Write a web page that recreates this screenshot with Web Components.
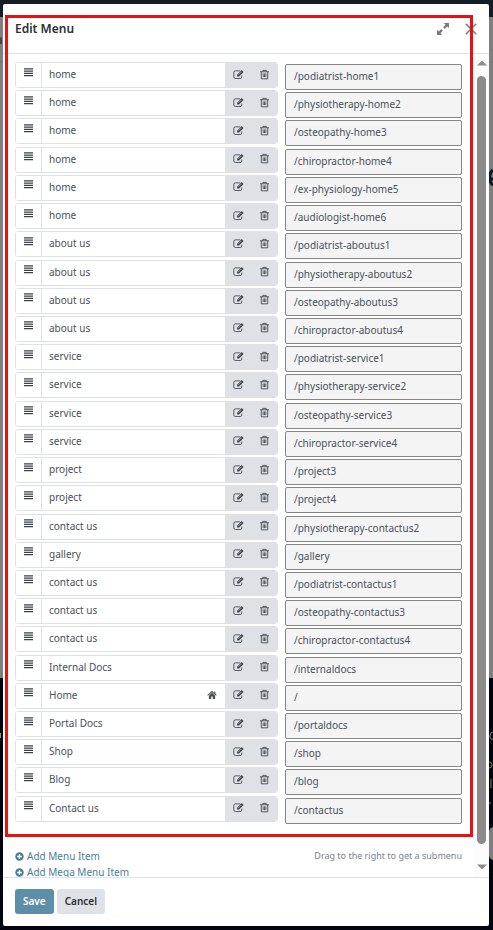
<!DOCTYPE html>
<html lang="en">
<head>
<meta charset="utf-8">
<meta name="viewport" content="width=device-width, initial-scale=1">
<title>Edit Menu</title>
<style>
    html, body {
        height: 100%;
        margin: 0;
    }

    body {
        font-family: "Noto Sans", "Open Sans", sans-serif;
        font-size: 10px;
        line-height: 16px;
        color: #495057;
        overflow: hidden;
    }
</style>
</head>
<body>
<menu-dialog heading="Edit Menu">
    <menu-list></menu-list>
</menu-dialog>

<script>
const ICONS = {
    bars: '<path d="M0 1.600h16M0 5.600h16M0 9.600h16M0 13.600h16" stroke="currentColor" stroke-width="1.900" fill="none"/>',
    edit: '<path d="M10.500 2.700H3.500a2.300 2.300 0 0 0-2.300 2.300v6.500a2.300 2.300 0 0 0 2.300 2.300h7a2.300 2.300 0 0 0 2.300-2.300V9.500" stroke="currentColor" stroke-width="1.200" fill="none"/><path d="M6 8.300 12.700 1.600l2.700 2.700L8.700 11H6z" fill="currentColor"/><path d="m7.500 8.800 4.700-4.700" stroke="#dee2e6" stroke-width=".8"/>',
    trash: '<path d="M1.500 4h13M5.500 4V2h5v2M3.300 4v10.300h9.400V4M6 6.500v5.300M8 6.500v5.300M10 6.500v5.300" stroke="currentColor" stroke-width="1.200" fill="none" stroke-linejoin="round"/>',
    home: '<path d="M8 4.500 3 9v5.500h3.800v-4h2.400v4H13V9z" fill="currentColor"/><path d="m1 8.500 7-6 7 6M12.500 6V2.500" stroke="currentColor" stroke-width="1.700" fill="none"/>',
    plus: '<circle cx="8" cy="8" r="7.500" fill="currentColor"/><path d="M8 3.800v8.400M3.800 8h8.400" stroke="#fff" stroke-width="2.400"/>',
    expand: '<path d="M9 0h7v7l-2.400-2.400-3.300 3.300-2.200-2.200 3.300-3.300zM7 16H0V9l2.400 2.400 3.300-3.300 2.200 2.200-3.300 3.300z" fill="currentColor"/>',
    close: '<path d="m1 1 14 14M15 1 1 15" stroke="currentColor" stroke-width="2" fill="none"/>',
    up: '<path d="M0 12 8 4l8 8z" fill="currentColor"/>',
    down: '<path d="M0 4l8 8 8-8z" fill="currentColor"/>'
};

class UiIcon extends HTMLElement {
    connectedCallback() {
        const shadow = this.attachShadow({ mode: 'open' });
        shadow.innerHTML = `
            <style>
                :host { display: inline-flex; width: var(--size, 10px); height: var(--size, 10px); }
                svg { width: 100%; height: 100%; }
            </style>
            <svg viewBox="0 0 16 16" aria-hidden="true">${ICONS[this.getAttribute('name')]}</svg>
        `;
    }
}

class MenuRow extends HTMLElement {
    connectedCallback() {
        const label = this.getAttribute('label');
        const url = this.getAttribute('url');
        const home = this.hasAttribute('home') ? '<ui-icon name="home" title="Home page"></ui-icon>' : '';
        const shadow = this.attachShadow({ mode: 'open' });

        shadow.innerHTML = `
            <style>
                :host {
                    display: grid;
                    grid-template-columns: minmax(0, 1fr) 177px;
                    column-gap: 7px;
                    height: 28px;
                }

                * { box-sizing: border-box; }

                .item {
                    display: flex;
                    height: 26px;
                    border: 1px solid #dee2e6;
                    border-radius: 3px;
                    overflow: hidden;
                }

                button {
                    width: 26px;
                    padding: 0 0 2px;
                    border: 0;
                    display: flex;
                    justify-content: center;
                    align-items: center;
                    background: #dee2e6;
                    color: #3b4148;
                    --size: 11px;
                    cursor: pointer;
                }

                .handle {
                    background: #fff;
                    border-right: 1px solid #dee2e6;
                    padding-bottom: 6px;
                    --size: 9px;
                    cursor: move;
                }

                .field {
                    flex: 1;
                    min-width: 0;
                    display: flex;
                    align-items: center;
                    padding: 0 8px 2px 7px;
                }

                input {
                    font: inherit;
                    color: inherit;
                    min-width: 0;
                    outline: 0;
                }

                .field input {
                    flex: 1;
                    border: 0;
                    padding: 0;
                    background: none;
                }

                .url {
                    width: 100%;
                    height: 26px;
                    margin-top: 2px;
                    padding: 0 8px 2px;
                    border: 1px solid #868686;
                    border-radius: 2px;
                    background: #f4f4f4;
                }
            </style>
            <div class="item">
                <button class="handle" aria-label="Move ${label}"><ui-icon name="bars"></ui-icon></button>
                <div class="field">
                    <input type="text" readonly aria-label="Menu label" value="${label}">
                    ${home}
                </div>
                <button aria-label="Edit ${label}"><ui-icon name="edit"></ui-icon></button>
                <button aria-label="Delete ${label}"><ui-icon name="trash"></ui-icon></button>
            </div>
            <input class="url" type="text" readonly aria-label="Menu url" value="${url}">
        `;
    }
}

const MENU = [
    ['home', '/podiatrist-home1'],
    ['home', '/physiotherapy-home2'],
    ['home', '/osteopathy-home3'],
    ['home', '/chiropractor-home4'],
    ['home', '/ex-physiology-home5'],
    ['home', '/audiologist-home6'],
    ['about us', '/podiatrist-aboutus1'],
    ['about us', '/physiotherapy-aboutus2'],
    ['about us', '/osteopathy-aboutus3'],
    ['about us', '/chiropractor-aboutus4'],
    ['service', '/podiatrist-service1'],
    ['service', '/physiotherapy-service2'],
    ['service', '/osteopathy-service3'],
    ['service', '/chiropractor-service4'],
    ['project', '/project3'],
    ['project', '/project4'],
    ['contact us', '/physiotherapy-contactus2'],
    ['gallery', '/gallery'],
    ['contact us', '/podiatrist-contactus1'],
    ['contact us', '/osteopathy-contactus3'],
    ['contact us', '/chiropractor-contactus4'],
    ['Internal Docs', '/internaldocs'],
    ['Home', '/'],
    ['Portal Docs', '/portaldocs'],
    ['Shop', '/shop'],
    ['Blog', '/blog'],
    ['Contact us', '/contactus']
];

class MenuList extends HTMLElement {
    connectedCallback() {
        const shadow = this.attachShadow({ mode: 'open' });
        const rows = MENU.map(([label, url]) =>
            `<menu-row label="${label}" url="${url}" ${url === '/' ? 'home' : ''}></menu-row>`
        ).join('');

        shadow.innerHTML = `
            <style>
                :host { display: flex; flex-direction: column; flex: 1; }

                .rows {
                    flex: 1;
                    display: flex;
                    flex-direction: column;
                    justify-content: space-between;
                }

                .actions {
                    display: flex;
                    justify-content: space-between;
                    margin-top: 24px;
                }

                .links { display: flex; flex-direction: column; }

                a {
                    display: flex;
                    align-items: center;
                    gap: 3px;
                    color: #4a7d97;
                    text-decoration: none;
                    --size: 9px;
                }

                small { font-size: 9px; color: #7c838a; }
            </style>
            <div class="rows">${rows}</div>
            <div class="actions">
                <div class="links">
                    <a href="#"><ui-icon name="plus"></ui-icon>Add Menu Item</a>
                    <a href="#"><ui-icon name="plus"></ui-icon>Add Mega Menu Item</a>
                </div>
                <small>Drag to the right to get a submenu</small>
            </div>
        `;
    }
}

//Scroll track drawn beside the dialog body
class ScrollTrack extends HTMLElement {
    connectedCallback() {
        const shadow = this.attachShadow({ mode: 'open' });
        shadow.innerHTML = `
            <style>
                :host {
                    display: flex;
                    flex-direction: column;
                    align-items: center;
                    gap: 8px;
                    width: 15px;
                    padding: 4px 0 5px;
                    box-sizing: border-box;
                    background: #fcfcfc;
                    color: #8b8b8b;
                }

                .thumb {
                    flex: 1;
                    width: 9px;
                    margin-bottom: 10px;
                    border-radius: 5px;
                    background: #8b8b8b;
                }
            </style>
            <ui-icon name="up"></ui-icon>
            <div class="thumb"></div>
            <ui-icon name="down"></ui-icon>
        `;
    }
}

class MenuDialog extends HTMLElement {
    connectedCallback() {
        const shadow = this.attachShadow({ mode: 'open' });
        shadow.innerHTML = `
            <style>
                :host {
                    display: flex;
                    height: 100%;
                    background: linear-gradient(#141c26 17px, #7f7f7f 17px, #7f7f7f 678px, #02050f 678px);
                }

                * { box-sizing: border-box; }

                /* slivers of the dimmed page on both sides of the dialog */
                .edge { width: 3px; }
                .edge.right { width: 4px; }
                .edge svg { display: block; width: 100%; height: 100%; }

                .modal {
                    position: relative;
                    flex: 1;
                    min-width: 0;
                    margin: 4px 0;
                    display: flex;
                    flex-direction: column;
                    background: #fff;
                    border-radius: 2px;
                }

                header {
                    display: flex;
                    align-items: center;
                    height: 50px;
                    padding: 0 12px;
                    border-bottom: 1px solid #dee2e6;
                }

                h4 {
                    flex: 1;
                    margin: 0;
                    font-size: 12px;
                    font-weight: 600;
                    color: #2b3035;
                }

                header button {
                    padding: 0;
                    border: 0;
                    margin-left: 16px;
                    display: flex;
                    background: none;
                    color: #7a7a7a;
                    --size: 12px;
                }

                main { flex: 1; min-height: 0; display: flex; }

                .scroll { flex: 1; min-width: 0; overflow: hidden; }

                .content {
                    display: flex;
                    flex-direction: column;
                    min-height: calc(100% + 3px);
                    padding: 8px 12px 0;
                }

                footer {
                    display: flex;
                    gap: 3px;
                    padding: 11px 12px 12px;
                    border-top: 1px solid #dee2e6;
                }

                footer button {
                    height: 25px;
                    padding: 0 8px 2px;
                    border: 0;
                    border-radius: 3px;
                    font: inherit;
                    font-weight: 600;
                    background: #dee2e6;
                    color: #2b3035;
                }

                footer .primary { background: #5c8ea8; color: #fff; }

                .frame {
                    position: absolute;
                    top: 11px;
                    right: 16px;
                    bottom: 89px;
                    left: 2px;
                    border: 3px solid #e81010;
                    pointer-events: none;
                }
            </style>
            <div class="edge">
                <svg aria-hidden="true">
                    <path d="M0 37q2 0 2 3v4H0z" fill="#4c4540"/>
                    <path d="M0 62h3" stroke="#747474"/>
                    <path d="M0 733h1v5H0z" fill="#a58a76"/>
                </svg>
            </div>
            <section class="modal" role="dialog" aria-labelledby="heading">
                <header>
                    <h4 id="heading">${this.getAttribute('heading')}</h4>
                    <button aria-label="Expand"><ui-icon name="expand"></ui-icon></button>
                    <button aria-label="Close"><ui-icon name="close"></ui-icon></button>
                </header>
                <main>
                    <div class="scroll"><div class="content"><slot></slot></div></div>
                    <scroll-track></scroll-track>
                </main>
                <footer>
                    <button class="primary">Save</button>
                    <button>Cancel</button>
                </footer>
                <div class="frame"></div>
            </section>
            <div class="edge right">
                <svg aria-hidden="true">
                    <path d="M0 62h4" stroke="#747474"/>
                    <path d="M4 170a9 9 0 0 0-3 9h3M1 180q0 3 3 5" stroke="#10151c" stroke-width="3" fill="none"/>
                    <path d="M4 732q-3 0-3 4t3 3" stroke="#8b8f95" fill="none"/>
                    <path d="M0 762q3 0 3 3t-3 3M2 779v9M0 803h2" stroke="#8d7a6c" fill="none"/>
                    <path d="M4 827q-4 1-4 5v23q0 4 4 5z" fill="#7f7f7f"/>
                </svg>
            </div>
        `;
    }
}

window.customElements.define('ui-icon', UiIcon);
window.customElements.define('menu-row', MenuRow);
window.customElements.define('menu-list', MenuList);
window.customElements.define('scroll-track', ScrollTrack);
window.customElements.define('menu-dialog', MenuDialog);
</script>
</body>
</html>
